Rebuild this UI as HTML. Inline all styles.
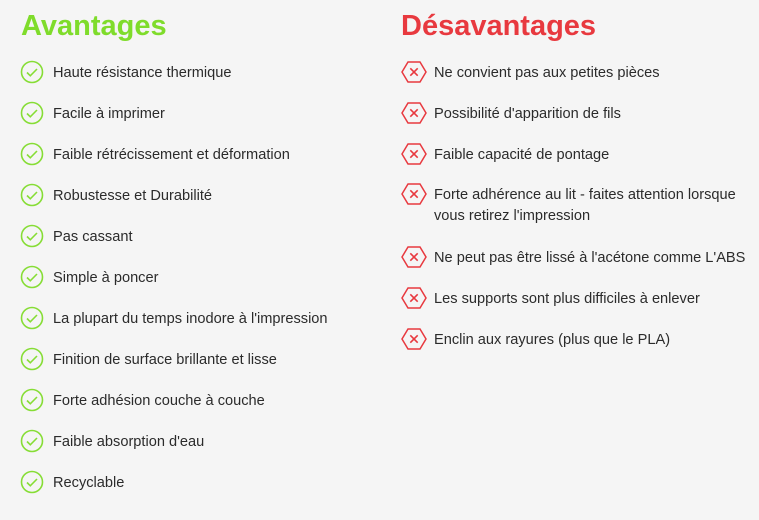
<!DOCTYPE html>
<html><head><meta charset="utf-8"><style>
html,body{margin:0;padding:0;background:#f5f5f5;width:759px;height:520px;overflow:hidden;font-family:"Liberation Sans",sans-serif;}
h1{position:absolute;margin:0;font-size:29px;font-weight:bold;top:9px;line-height:34px;}
.r{position:absolute;font-size:14.6px;color:#2b2b2b;line-height:21px;}
svg{position:absolute;}
</style></head><body>
<h1 style="left:21px;color:#7fdc2b">Avantages</h1>
<h1 style="left:401px;color:#e8393f">Désavantages</h1>
<div id="L"></div><div id="R"></div>
<script>
var L=["Haute résistance thermique","Facile à imprimer","Faible rétrécissement et déformation","Robustesse et Durabilité","Pas cassant","Simple à poncer","La plupart du temps inodore à l'impression","Finition de surface brillante et lisse","Forte adhésion couche à couche","Faible absorption d'eau","Recyclable"];
var h="";
L.forEach(function(t,i){var y=72+41*i;
h+='<svg style="left:20px;top:'+(y-12)+'px" width="24" height="24" viewBox="0 0 24 24"><circle cx="12" cy="12" r="10.5" fill="none" stroke="#86dd35" stroke-width="1.6"/><path d="M7 12.5l3.3 3.3L17 9" fill="none" stroke="#86dd35" stroke-width="1.6"/></svg>';
h+='<div class="r" style="left:53px;top:'+(y-9)+'px">'+t+'</div>';});
var R=[["Ne convient pas aux petites pièces",72],["Possibilité d'apparition de fils",113],["Faible capacité de pontage",154],["Forte adhérence au lit - faites attention lorsque<br>vous retirez l'impression",194],["Ne peut pas être lissé à l'acétone comme L'ABS",257],["Les supports sont plus difficiles à enlever",298],["Enclin aux rayures (plus que le PLA)",339]];
R.forEach(function(a){var y=a[1];
h+='<svg style="left:401px;top:'+(y-12)+'px" width="26" height="24" viewBox="0 0 26 24"><path d="M1 12L7 2H19L25 12L19 22H7Z" fill="none" stroke="#e8393f" stroke-width="1.5"/><path d="M9.3 8.3l7.4 7.4M16.7 8.3l-7.4 7.4" stroke="#e8393f" stroke-width="1.6"/></svg>';
h+='<div class="r" style="left:434px;top:'+(y-9)+'px">'+a[0]+'</div>';});
document.getElementById("L").innerHTML=h;
</script>
</body></html>
